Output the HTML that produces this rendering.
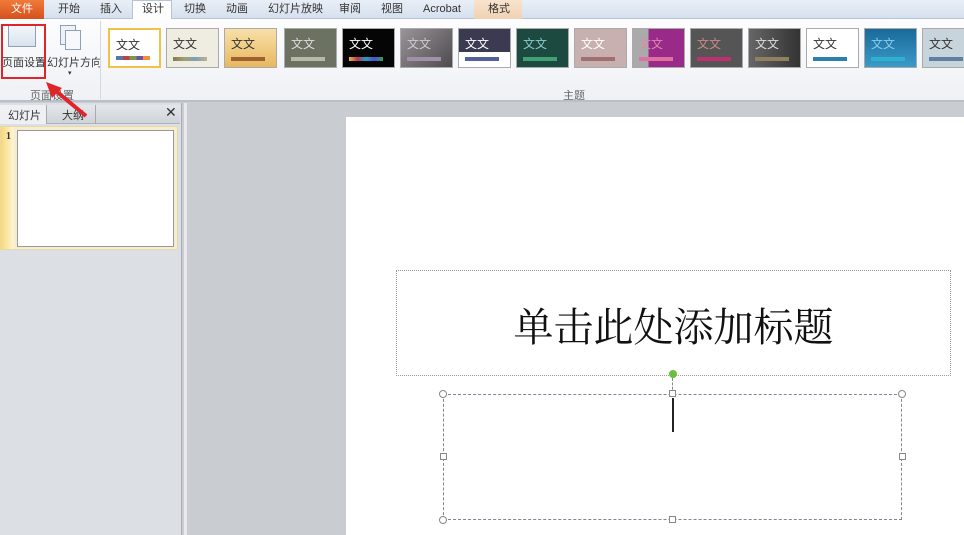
<!DOCTYPE html>
<html><head><meta charset="utf-8"><style>
*{margin:0;padding:0;box-sizing:border-box}
body{width:964px;height:535px;overflow:hidden;position:relative;background:#c9ccd1;font-family:"Liberation Sans","Noto Sans CJK SC",sans-serif;font-size:11px;color:#333}
.abs{position:absolute}
#tabs{left:0;top:0;width:964px;height:19px;background:linear-gradient(#e9eff7,#d6e0ee);border-bottom:1px solid #b8c4d4}
.tab{position:absolute;top:3px;font-size:11px;color:#333;line-height:13px}
#ribbon{left:0;top:19px;width:964px;height:83px;background:linear-gradient(#fdfdfe,#eef1f5);border-bottom:2px solid #b9c0c8}
.th{position:absolute;top:28px;width:53px;height:40px;border:1px solid #aaa;overflow:hidden}
.th span{position:absolute;left:6px;top:6px;font-size:12px}
.th i{position:absolute;left:6px;bottom:6px;width:34px;height:4px;display:block}
</style></head><body>
<div id="tabs" class="abs">
 <div class="abs" style="left:0;top:0;width:44px;height:19px;background:linear-gradient(#f07a3a,#d6501e);color:#fff;text-align:center;font-size:11px;line-height:18px">文件</div>
 <div class="tab" style="left:58px">开始</div>
 <div class="tab" style="left:100px">插入</div>
 <div class="abs" style="left:132px;top:0;width:40px;height:20px;background:#fdfdfe;border:1px solid #b8c4d4;border-bottom:none"></div>
 <div class="tab" style="left:142px">设计</div>
 <div class="tab" style="left:184px">切换</div>
 <div class="tab" style="left:226px">动画</div>
 <div class="tab" style="left:268px">幻灯片放映</div>
 <div class="tab" style="left:339px">审阅</div>
 <div class="tab" style="left:381px">视图</div>
 <div class="tab" style="left:423px">Acrobat</div>
 <div class="abs" style="left:474px;top:0;width:48px;height:19px;background:linear-gradient(#f8e3cc,#efd2b4)"></div>
 <div class="tab" style="left:488px">格式</div>
</div>
<div id="ribbon" class="abs">
 <div class="abs" style="left:8px;top:6px;width:28px;height:22px;border:1px solid #8ea0b4;background:linear-gradient(#f4f7fb,#d8e2ee)"></div>
 <div class="abs" style="left:2px;top:35px;font-size:11px">页面设置</div>
 <div class="abs" style="left:60px;top:6px;width:16px;height:20px;border:1px solid #8ea0b4;background:#eef2f7"></div>
 <div class="abs" style="left:65px;top:11px;width:16px;height:20px;border:1px solid #8ea0b4;background:#f6f8fb"></div>
 <div class="abs" style="left:47px;top:35px;font-size:11px">幻灯片方向</div>
 <div class="abs" style="left:68px;top:50px;font-size:7px">▾</div>
 <div class="abs" style="left:30px;top:68px;color:#666">页面设置</div>
 <div class="abs" style="left:100px;top:2px;width:1px;height:78px;background:#d4d9df"></div>
 <div class="abs" style="left:563px;top:68px;color:#666">主题</div>
</div>
<div class="abs" style="left:1px;top:24px;width:45px;height:55px;border:2px solid #e0252a"></div>
<div class="th" style="left:108px;background:#fff;border:2px solid #f0c24a"><span>文文</span><i style="background:linear-gradient(90deg,#5577aa 20%,#c04040 20% 40%,#7a9a4a 40% 60%,#7050a0 60% 80%,#f09030 80%)"></i></div>
<div class="th" style="left:166px;background:#efece2"><span>文文</span><i style="background:linear-gradient(90deg,#8a7a50,#a0a070,#80a0b0,#c0b090)"></i></div>
<div class="th" style="left:224px;background:linear-gradient(#f8e0a8,#e8b860)"><span>文文</span><i style="background:#a06030"></i></div>
<div class="th" style="left:284px;background:#6c7262;color:#ddd"><span>文文</span><i style="background:#b8baa8"></i></div>
<div class="th" style="left:342px;background:#050505;color:#fff"><span>文文</span><i style="background:linear-gradient(90deg,#e0c020,#c03060,#20a0c0,#5050d0,#30a050)"></i></div>
<div class="th" style="left:400px;background:linear-gradient(135deg,#9a9498,#4e4a4e);color:#ccc"><span>文文</span><i style="background:#a090a8"></i></div>
<div class="th" style="left:458px;background:linear-gradient(#3a3a50 60%,#fff 60%);color:#fff"><span>文文</span><i style="background:#5060a0"></i></div>
<div class="th" style="left:516px;background:#1c4a40;color:#8cc"><span>文文</span><i style="background:#40a070"></i></div>
<div class="th" style="left:574px;background:#c9b0b0;color:#fff"><span>文文</span><i style="background:#a07070"></i></div>
<div class="th" style="left:632px;background:linear-gradient(90deg,#aaa 30%,#9a2a8a 30%);color:#d8a"><span>文文</span><i style="background:#e070a0"></i></div>
<div class="th" style="left:690px;background:#555;color:#c88"><span>文文</span><i style="background:#c03070"></i></div>
<div class="th" style="left:748px;background:linear-gradient(90deg,#666,#333);color:#ddd"><span>文文</span><i style="background:#908060"></i></div>
<div class="th" style="left:806px;background:#fff"><span>文文</span><i style="background:#2a80b0"></i></div>
<div class="th" style="left:864px;background:linear-gradient(#1a6a9a,#3a9ac8);color:#8ce"><span>文文</span><i style="background:#30b0d0"></i></div>
<div class="th" style="left:922px;background:#c8d4dc"><span>文文</span><i style="background:#6080a0"></i></div>
<div class="abs" style="left:0;top:103px;width:182px;height:432px;background:#dcdfe3;border-right:1px solid #aab"></div>
<div class="abs" style="left:0;top:105px;width:180px;height:19px;background:linear-gradient(#e4e7eb,#cfd3d8);border-bottom:1px solid #b0b4ba"></div>
<div class="abs" style="left:0;top:105px;width:47px;height:19px;background:#eef0f3;border-right:1px solid #aaa"></div>
<div class="abs" style="left:8px;top:107px">幻灯片</div>
<div class="abs" style="left:62px;top:107px">大纲</div>
<div class="abs" style="left:95px;top:105px;width:1px;height:19px;background:#aaa"></div>
<div class="abs" style="left:165px;top:104px;font-size:14px">✕</div>
<div class="abs" style="left:0;top:126px;width:178px;height:124px;background:linear-gradient(90deg,#f8d878,#fff3d0 12px,#f6ecd2 14px);border:1px solid #e8d8a8"></div>
<div class="abs" style="left:6px;top:131px;font-size:10px;font-weight:bold;font-family:'Liberation Serif',serif">1</div>
<div class="abs" style="left:17px;top:130px;width:157px;height:117px;background:#fff;border:1px solid #999"></div>
<div class="abs" style="left:184px;top:103px;width:3px;height:432px;background:#e8eaed"></div>
<svg class="abs" style="left:40px;top:80px" width="50" height="40"><path d="M46 36 L10 6" stroke="#e0252a" stroke-width="4"/><path d="M6 2 L22 8 L12 18 Z" fill="#e0252a"/></svg>
<div class="abs" style="left:346px;top:117px;width:618px;height:418px;background:#fff"></div>
<div class="abs" style="left:396px;top:270px;width:555px;height:106px;border:1px dotted #999"></div>
<div class="abs" style="left:396px;top:296px;width:555px;text-align:center;font-family:'Liberation Serif','Noto Serif CJK SC',serif;font-size:40px;color:#111">单击此处添加标题</div>
<div class="abs" style="left:443px;top:394px;width:459px;height:126px;border:1px dashed #7a8898"></div>
<div class="abs" style="left:672px;top:378px;width:1px;height:16px;border-left:1px dashed #888"></div>
<div class="abs" style="left:669px;top:370px;width:8px;height:8px;border-radius:50%;background:#6cbf3c"></div>
<div class="abs" style="left:672px;top:398px;width:2px;height:34px;background:#222"></div>
<div class="abs" style="left:439px;top:390px;width:8px;height:8px;border-radius:50%;border:1px solid #888;background:#fff"></div>
<div class="abs" style="left:898px;top:390px;width:8px;height:8px;border-radius:50%;border:1px solid #888;background:#fff"></div>
<div class="abs" style="left:439px;top:516px;width:8px;height:8px;border-radius:50%;border:1px solid #888;background:#fff"></div>
<div class="abs" style="left:669px;top:390px;width:7px;height:7px;border:1px solid #888;background:#fff"></div>
<div class="abs" style="left:669px;top:516px;width:7px;height:7px;border:1px solid #888;background:#fff"></div>
<div class="abs" style="left:440px;top:453px;width:7px;height:7px;border:1px solid #888;background:#fff"></div>
<div class="abs" style="left:899px;top:453px;width:7px;height:7px;border:1px solid #888;background:#fff"></div>
</body></html>
